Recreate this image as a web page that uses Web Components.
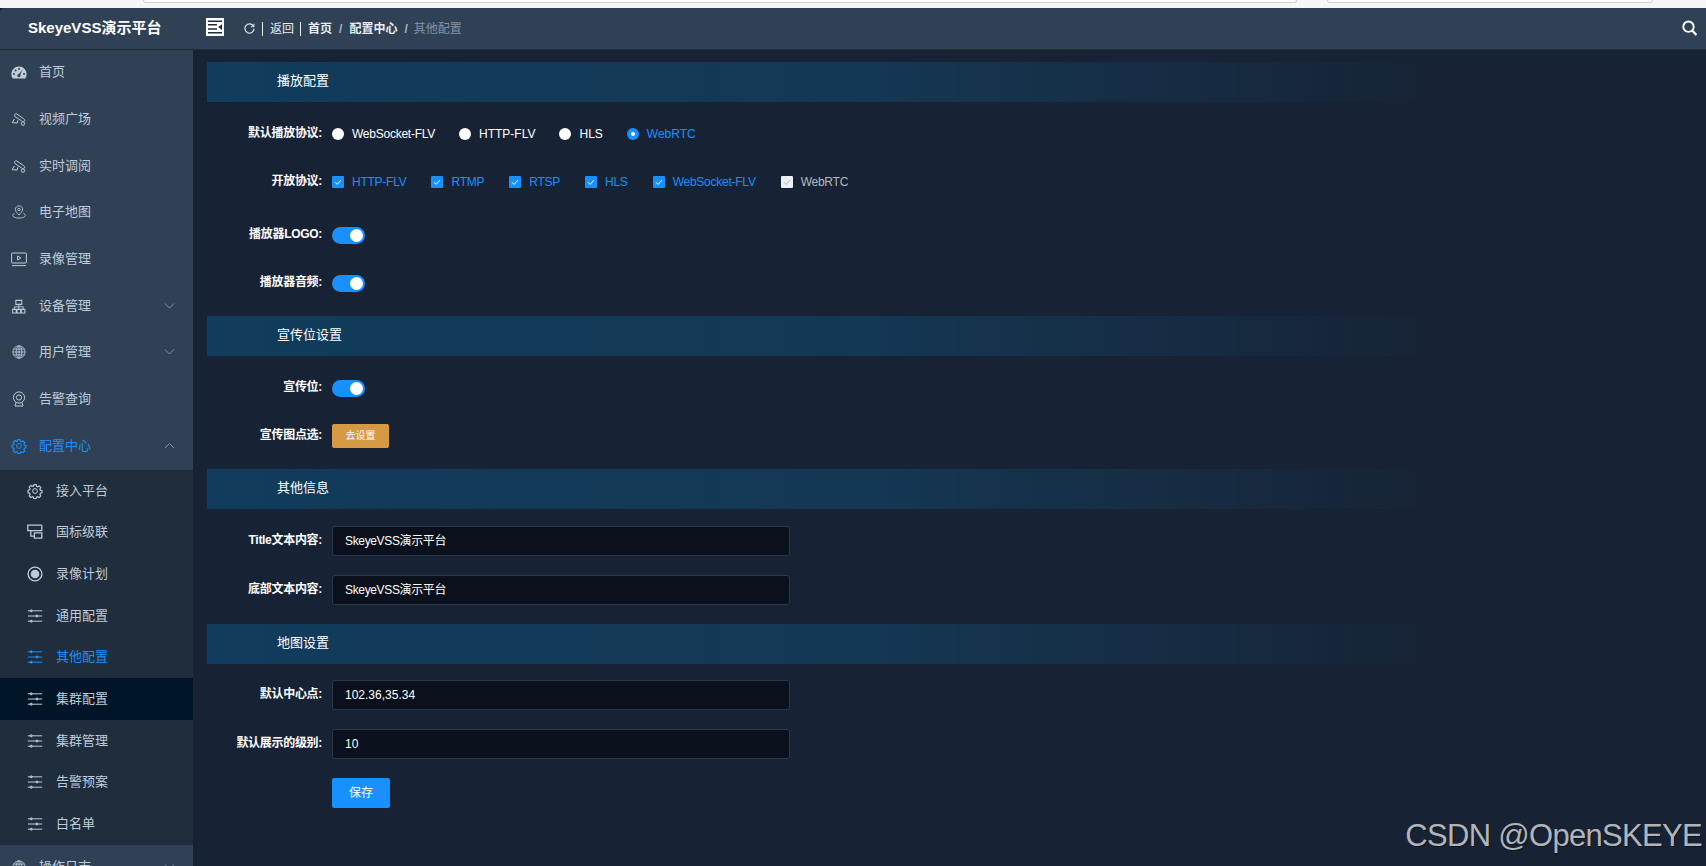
<!DOCTYPE html>
<html lang="zh">
<head>
<meta charset="utf-8">
<title>SkeyeVSS演示平台</title>
<style>
  html, body { margin: 0; height: 866px; overflow: hidden; background: #172335; }
  body { font-family: "Liberation Sans", "Noto Sans CJK SC", sans-serif; line-height: 16px; }
</style>
</head>
<body>
<app-shell>
  <side-nav slot="nav">
    <nav-item icon="dash" label="首页"></nav-item>
    <nav-item icon="cam" label="视频广场"></nav-item>
    <nav-item icon="cam" label="实时调阅"></nav-item>
    <nav-item icon="pin" label="电子地图"></nav-item>
    <nav-item icon="screen" label="录像管理"></nav-item>
    <nav-item icon="org" label="设备管理" arrow="down"></nav-item>
    <nav-item icon="globe" label="用户管理" arrow="down"></nav-item>
    <nav-item icon="webcam" label="告警查询"></nav-item>
    <nav-item icon="gear" label="配置中心" arrow="up" active></nav-item>
    <sub-menu>
      <sub-item icon="gear" label="接入平台"></sub-item>
      <sub-item icon="cascade" label="国标级联"></sub-item>
      <sub-item icon="record" label="录像计划"></sub-item>
      <sub-item icon="sliders" label="通用配置"></sub-item>
      <sub-item icon="sliders" label="其他配置" active></sub-item>
      <sub-item icon="sliders" label="集群配置" hover></sub-item>
      <sub-item icon="sliders" label="集群管理"></sub-item>
      <sub-item icon="sliders" label="告警预案"></sub-item>
      <sub-item icon="sliders" label="白名单"></sub-item>
    </sub-menu>
    <nav-item icon="globe" label="操作日志" arrow="down"></nav-item>
  </side-nav>

  <form-section title="播放配置">
    <form-row label="默认播放协议:">
      <radio-opt style="letter-spacing:-.25px">WebSocket-FLV</radio-opt>
      <radio-opt>HTTP-FLV</radio-opt>
      <radio-opt>HLS</radio-opt>
      <radio-opt checked>WebRTC</radio-opt>
    </form-row>
    <form-row label="开放协议:">
      <check-opt checked>HTTP-FLV</check-opt>
      <check-opt checked>RTMP</check-opt>
      <check-opt checked>RTSP</check-opt>
      <check-opt checked>HLS</check-opt>
      <check-opt checked>WebSocket-FLV</check-opt>
      <check-opt disabled>WebRTC</check-opt>
    </form-row>
    <form-row label="播放器LOGO:" style="margin-top:5px"><toggle-switch></toggle-switch></form-row>
    <form-row label="播放器音频:"><toggle-switch></toggle-switch></form-row>
  </form-section>

  <form-section title="宣传位设置">
    <form-row label="宣传位:"><toggle-switch></toggle-switch></form-row>
    <form-row label="宣传图点选:"><action-button kind="warn">去设置</action-button></form-row>
  </form-section>

  <form-section title="其他信息" style="--row-gap:19px">
    <form-row label="Title文本内容:"><text-field style="letter-spacing:-.35px">SkeyeVSS演示平台</text-field></form-row>
    <form-row label="底部文本内容:"><text-field style="letter-spacing:-.35px">SkeyeVSS演示平台</text-field></form-row>
  </form-section>

  <form-section title="地图设置" style="--row-gap:19px;--row-top:16px">
    <form-row label="默认中心点:"><text-field>102.36,35.34</text-field></form-row>
    <form-row label="默认展示的级别:"><text-field>10</text-field></form-row>
    <form-row><action-button kind="save">保存</action-button></form-row>
  </form-section>
</app-shell>

<script>
// trazos de los iconos del menu, todos en una caja de 16x16
const ICONS = {
  dash: `<g transform="translate(0 1)"><path fill="currentColor" stroke="none" d="M8 1.600C3.700 1.600.4 5 .4 9.200c0 1.500.4 2.900 1.200 4 .2.3.5.4.8.4h11.200c.3 0 .6-.1.8-.4.8-1.100 1.200-2.500 1.200-4C15.600 5 12.300 1.600 8 1.600z"/>
    <g fill="#304156" stroke="none"><circle cx="3" cy="9" r="1"/><circle cx="4.600" cy="5.400" r="1"/><circle cx="8" cy="4" r="1"/><circle cx="13" cy="9" r="1"/><path d="M11.800 4.800 9.300 9.600a1.600 1.600 0 1 1-1.500-.7z"/></g></g>`,
  cam: `<path d="M5.200 2.600 12.600 7.600c1.100.9 1.400 1.900.7 2.600-.7.7-1.700.5-2.700-.3L3.900 5.600C3.200 4 3.900 2.800 5.200 2.600z"/>
    <path d="M3.300 8 1.200 11.600l5 .5M6.800 9.300 6.200 12"/><circle cx="12" cy="12.600" r="1.700"/>`,
  pin: `<g transform="translate(.8 .8) scale(.9)"><path d="M8 1.200c-2.300 0-4 1.700-4 3.900 0 2.400 2.200 4.300 4 6.300 1.800-2 4-3.900 4-6.300 0-2.200-1.700-3.900-4-3.900z"/><circle cx="8" cy="5.200" r="1.300"/>
    <path d="M3 9.600c-1.300.6-2 1.500-2 2.300 0 1.500 3 2.800 7 2.800s7-1.300 7-2.800c0-.8-.7-1.700-2-2.300"/></g>`,
  screen: `<rect x=".6" y="2" width="14.800" height="10" rx=".8"/><path d="M1 14.600h14"/><path d="M6.600 5v4l3.200-2z"/>`,
  org: `<g transform="translate(1 .8) scale(.85 1)"><path stroke-width="1.200" d="M4.500 1.500h7v4h-7zM.8 10.500h4.200v3.700H.8zM5.900 10.500h4.200v3.700H5.900zM11 10.500h4.200v3.700H11z"/><path d="M8 5.500v2.500M2.800 10.500V8h10.400v2.500M8 8v2.500"/></g>`,
  globe: `<g transform="translate(1 1) scale(.875)"><circle cx="8" cy="8" r="7"/><ellipse cx="8" cy="8" rx="3.200" ry="7"/><path d="M8 1v14M1 8h14M2 4.700h12M2 11.300h12"/></g>`,
  webcam: `<circle cx="8" cy="6.500" r="5.600"/><circle cx="8" cy="6.500" r="2.600"/><path d="M5 11.500 4 15h8l-1-3.500"/>`,
  gear: `<path stroke-width="1.300" d="M6.700 1.200h2.600l.4 1.900 1.300.6 1.700-1 1.800 1.900-1 1.600.5 1.300 1.800.5v2.500l-1.800.5-.5 1.300 1 1.600-1.800 1.900-1.700-1-1.300.6-.4 1.500H6.700l-.4-1.500-1.300-.6-1.700 1-1.800-1.900 1-1.600-.5-1.300-1.800-.5V7.500l1.800-.5.5-1.300-1-1.600 1.800-1.900 1.700 1L6.300 3.100z" transform="translate(.9 .5) scale(.89)"/><circle cx="8" cy="8" r="2.400"/>`,
  cascade: `<path stroke-width="1.300" d="M14.800 1.200H.8v5.400h7.400M14.800 1.200v5.400H8.200M3.800 6.600v5.600h3.600M7.400 8.800h7.400v5.400H7.400z"/>`,
  record: `<circle cx="8" cy="8" r="6.900" stroke-width="1.400"/><circle cx="8" cy="8" r="4.300" fill="currentColor" stroke="none"/>`,
  sliders: `<path d="M.8 2.800h14.400M.8 8h14.400M.8 13.200h14.400"/><g fill="#8d99a8" stroke="currentColor"><circle cx="4.200" cy="2.800" r="1"/><circle cx="10" cy="8" r="1"/><circle cx="4.200" cy="13.200" r="1"/></g>`
};

class SvgIcon extends HTMLElement {
  connectedCallback() {
    this.attachShadow({ mode: "open" });
    const size = this.getAttribute("size") || 16;
    this.shadowRoot.innerHTML = `
      <style>:host { display: inline-flex; flex: none; width: ${size}px; height: ${size}px; } svg { display: block; }</style>
      <svg viewBox="0 0 16 16" width="${size}" height="${size}" fill="none" stroke="currentColor" stroke-width="1">${ICONS[this.getAttribute("name")] || ""}</svg>`;
  }
}

class AppShell extends HTMLElement {
  constructor() {
    super();
    this.attachShadow({ mode: "open" });
    this.shadowRoot.innerHTML = `
      <style>
        :host { display: flex; flex-direction: column; height: 866px; position: relative; overflow: hidden; }
        .body { flex: 1; display: flex; min-height: 0; }
        main { flex: 1; padding: 12px 14px 0; background: #172335; min-width: 0; }
        .mark {
          position: absolute; right: 4px; top: 816px; font-size: 31px; line-height: 40px; letter-spacing: -.7px;
          color: #b1b4b9; text-shadow: 1px 1px 1px rgba(0, 0, 0, .45);
        }
      </style>
      <browser-strip></browser-strip>
      <top-bar></top-bar>
      <div class="body">
        <slot name="nav"></slot>
        <main><slot></slot></main>
      </div>
      <div class="mark">CSDN @OpenSKEYE</div>`;
  }
}

// el trozo de la barra del navegador que sale arriba de la captura
class BrowserStrip extends HTMLElement {
  constructor() {
    super();
    this.attachShadow({ mode: "open" });
    this.shadowRoot.innerHTML = `
      <style>
        :host { display: flex; height: 8px; background: #f7f7f7; box-sizing: border-box; padding-left: 143px; gap: 30px; flex: none; }
        div { height: 3px; box-sizing: border-box; background: #fff; border: 1px solid #d2d2d2; border-top: 0; border-radius: 0 0 6px 6px; }
        .a { width: 1154px; } .b { width: 326px; }
      </style>
      <div class="a"></div><div class="b"></div>`;
  }
}

class TopBar extends HTMLElement {
  constructor() {
    super();
    this.attachShadow({ mode: "open" });
    this.shadowRoot.innerHTML = `
      <style>
        :host { display: flex; align-items: center; flex: none; height: 41px; background: #304156; color: #fff; border-radius: 5px 0 0 0; border-bottom: 1px solid #1c2a3b; }
        .brand { width: 165px; padding-left: 28px; padding-bottom: 2px; font-size: 15px; font-weight: bold; white-space: nowrap; }
        .fold { margin-left: 13px; margin-bottom: 3px; width: 18px; height: 18px; display: block; flex: none; }
        .reload { margin-left: 20px; width: 11px; height: 11px; flex: none; color: #dfe4ea; display: block; }
        .sep { width: 1px; height: 14px; background: #e8ebef; margin: 0 7px; flex: none; }
        .crumb { font-size: 12px; color: #e9edf2; }
        .crumb.b { font-weight: bold; }
        .slash { margin: 0 7px; font-size: 12px; color: #aab4c0; font-weight: bold; }
        .slash.last { margin-right: 6px; }
        .now { font-size: 12px; color: #8493a6; }
        .search { margin-left: auto; margin-right: 9px; margin-bottom: 2px; width: 15px; height: 16px; display: block; flex: none; }
      </style>
      <div class="brand">SkeyeVSS演示平台</div>
      <svg class="fold" viewBox="0 0 18 18"><rect width="18" height="18" fill="#fff"/><path d="M2 3.200h14M2 6.800h9M2 11h9M2 14.800h14" stroke="#1d2b3c" stroke-width="1.500" fill="none"/><path d="M16 6.200v5.800l-3.800-2.900z" fill="#1d2b3c"/></svg>
      <svg class="reload" viewBox="0 0 12 12" fill="none" stroke="currentColor" stroke-width="1.300"><path d="M10.400 3.600A5 5 0 1 0 11 6.400"/><path d="M10.800 .8v3.200H7.600" stroke-width="1.100"/></svg>
      <span class="sep"></span>
      <span class="crumb">返回</span>
      <span class="sep" style="margin-left:6px"></span>
      <span class="crumb b">首页</span><span class="slash">/</span>
      <span class="crumb b">配置中心</span><span class="slash last">/</span>
      <span class="now">其他配置</span>
      <svg class="search" viewBox="0 0 15 16" fill="none" stroke="#fff"><circle cx="6.500" cy="6.700" r="5.200" stroke-width="1.900"/><path d="M10.400 10.800 14.400 15" stroke-width="2.300"/></svg>`;
  }
}

class SideNav extends HTMLElement {
  constructor() {
    super();
    this.attachShadow({ mode: "open" });
    this.shadowRoot.innerHTML = `
      <style>:host { display: block; width: 193px; flex: none; background: #304156; overflow: hidden; }</style>
      <slot></slot>`;
  }
}

class NavItem extends HTMLElement {
  connectedCallback() {
    this.attachShadow({ mode: "open" });
    const arrow = this.getAttribute("arrow");
    const path = arrow === "up" ? "M1 6 5.500 1.500 10 6" : "M1 1.500 5.500 6 10 1.500";
    this.shadowRoot.innerHTML = `
      <style>
        :host { display: flex; align-items: center; height: 46.67px; padding-left: 11px; color: #bfcbd9; font-size: 13px; box-sizing: border-box; }
        :host([active]) { color: #1890ff; }
        svg-icon { margin-bottom: 2px; }
        .txt { margin-left: 12px; margin-bottom: 2px; }
        .arr { margin-left: auto; margin-right: 18px; margin-bottom: 3px; width: 11px; height: 7px; color: #8693a4; }
      </style>
      <svg-icon name="${this.getAttribute("icon")}"></svg-icon>
      <span class="txt">${this.getAttribute("label")}</span>
      ${arrow ? `<svg class="arr" viewBox="0 0 11 7" fill="none" stroke="currentColor"><path d="${path}"/></svg>` : ""}`;
  }
}

class SubMenu extends HTMLElement {
  constructor() {
    super();
    this.attachShadow({ mode: "open" });
    this.shadowRoot.innerHTML = `
      <style>:host { display: block; background: #1f2d3d; }</style>
      <slot></slot>`;
  }
}

class SubItem extends HTMLElement {
  connectedCallback() {
    this.attachShadow({ mode: "open" });
    this.shadowRoot.innerHTML = `
      <style>
        :host { display: flex; align-items: center; height: 41.67px; padding-left: 27px; color: #bfcbd9; font-size: 13px; box-sizing: border-box; }
        :host([active]) { color: #1890ff; }
        :host([hover]) { background: #001528; }
        .txt { margin-left: 13px; }
      </style>
      <svg-icon name="${this.getAttribute("icon")}"></svg-icon>
      <span class="txt">${this.getAttribute("label")}</span>`;
  }
}

class FormSection extends HTMLElement {
  connectedCallback() {
    this.attachShadow({ mode: "open" });
    this.shadowRoot.innerHTML = `
      <style>
        :host { display: block; color: #fff; }
        .bar {
          height: 40px; box-sizing: border-box; display: flex; align-items: center; padding: 0 0 2px 70px; font-size: 13px;
          background: linear-gradient(90deg, #113c5d 0%, #143753 45%, #172335 82%);
        }
        .rows { display: flex; flex-direction: column; gap: var(--row-gap, 18px); padding: var(--row-top, 17px) 0 var(--row-gap, 18px); }
      </style>
      <div class="bar">${this.getAttribute("title")}</div>
      <div class="rows"><slot></slot></div>`;
    this.removeAttribute("title");
  }
}

class FormRow extends HTMLElement {
  connectedCallback() {
    this.attachShadow({ mode: "open" });
    this.shadowRoot.innerHTML = `
      <style>
        :host { display: flex; align-items: center; height: 30px; }
        .label { width: 115px; flex: none; margin-right: 10px; padding-bottom: 2px; text-align: right; font-size: 12px; font-weight: bold; letter-spacing: -.3px; color: #fff; }
      </style>
      <div class="label">${this.getAttribute("label") || ""}</div>
      <slot></slot>`;
  }
}

class RadioOpt extends HTMLElement {
  constructor() {
    super();
    this.attachShadow({ mode: "open" });
    this.shadowRoot.innerHTML = `
      <style>
        :host { display: inline-flex; align-items: center; margin-right: 24px; font-size: 12px; color: #fff; }
        :host([checked]) { color: #1890ff; }
        i { width: 12px; height: 12px; border-radius: 50%; background: #fff; margin: 0 8px 0 0; display: flex; align-items: center; justify-content: center; }
        :host([checked]) i { background: #1890ff; }
        :host([checked]) i::after { content: ""; width: 4px; height: 4px; border-radius: 50%; background: #fff; }
      </style>
      <i></i><slot></slot>`;
  }
}

class CheckOpt extends HTMLElement {
  constructor() {
    super();
    this.attachShadow({ mode: "open" });
    this.shadowRoot.innerHTML = `
      <style>
        :host { display: inline-flex; align-items: center; margin-right: 25px; font-size: 12px; letter-spacing: -.25px; color: #1890ff; }
        :host([disabled]) { color: #b4b8be; }
        svg { width: 12px; height: 12px; margin-right: 8px; display: block; }
        rect { fill: #1890ff; }
        path { stroke: #fff; }
        :host([disabled]) rect { fill: #edf0f4; }
        :host([disabled]) path { stroke: #b9bec6; }
      </style>
      <svg viewBox="0 0 12 12"><rect width="12" height="12" rx="1"/><path d="M3 6.200 5.200 8.400 9 4" fill="none"/></svg><slot></slot>`;
  }
}

class ToggleSwitch extends HTMLElement {
  constructor() {
    super();
    this.attachShadow({ mode: "open" });
    this.shadowRoot.innerHTML = `
      <style>
        :host { display: flex; justify-content: flex-end; align-items: center; width: 33px; height: 17px; padding-right: 2px; box-sizing: border-box; border-radius: 9px; background: #1890ff; }
        i { width: 13px; height: 13px; border-radius: 50%; background: #fff; }
      </style>
      <i></i>`;
  }
}

class ActionButton extends HTMLElement {
  constructor() {
    super();
    this.attachShadow({ mode: "open" });
    this.shadowRoot.innerHTML = `
      <style>
        :host { display: flex; align-items: center; justify-content: center; box-sizing: border-box; padding-bottom: 1px; color: #fff; border-radius: 2px; }
        :host([kind="warn"]) { width: 57px; height: 24px; background: #d69a45; font-size: 10px; }
        :host([kind="save"]) { width: 58px; height: 30px; background: #1890ff; font-size: 12px; }
      </style>
      <slot></slot>`;
  }
}

class TextField extends HTMLElement {
  constructor() {
    super();
    this.attachShadow({ mode: "open" });
    this.shadowRoot.innerHTML = `
      <style>
        :host { display: flex; align-items: center; width: 458px; height: 30px; box-sizing: border-box; padding-left: 12px; background: #0a111c; border: 1px solid #2a384c; border-radius: 3px; color: #fff; font-size: 12px; }
      </style>
      <slot></slot>`;
  }
}

customElements.define("svg-icon", SvgIcon);
customElements.define("app-shell", AppShell);
customElements.define("browser-strip", BrowserStrip);
customElements.define("top-bar", TopBar);
customElements.define("side-nav", SideNav);
customElements.define("nav-item", NavItem);
customElements.define("sub-menu", SubMenu);
customElements.define("sub-item", SubItem);
customElements.define("form-section", FormSection);
customElements.define("form-row", FormRow);
customElements.define("radio-opt", RadioOpt);
customElements.define("check-opt", CheckOpt);
customElements.define("toggle-switch", ToggleSwitch);
customElements.define("action-button", ActionButton);
customElements.define("text-field", TextField);
</script>
</body>
</html>
